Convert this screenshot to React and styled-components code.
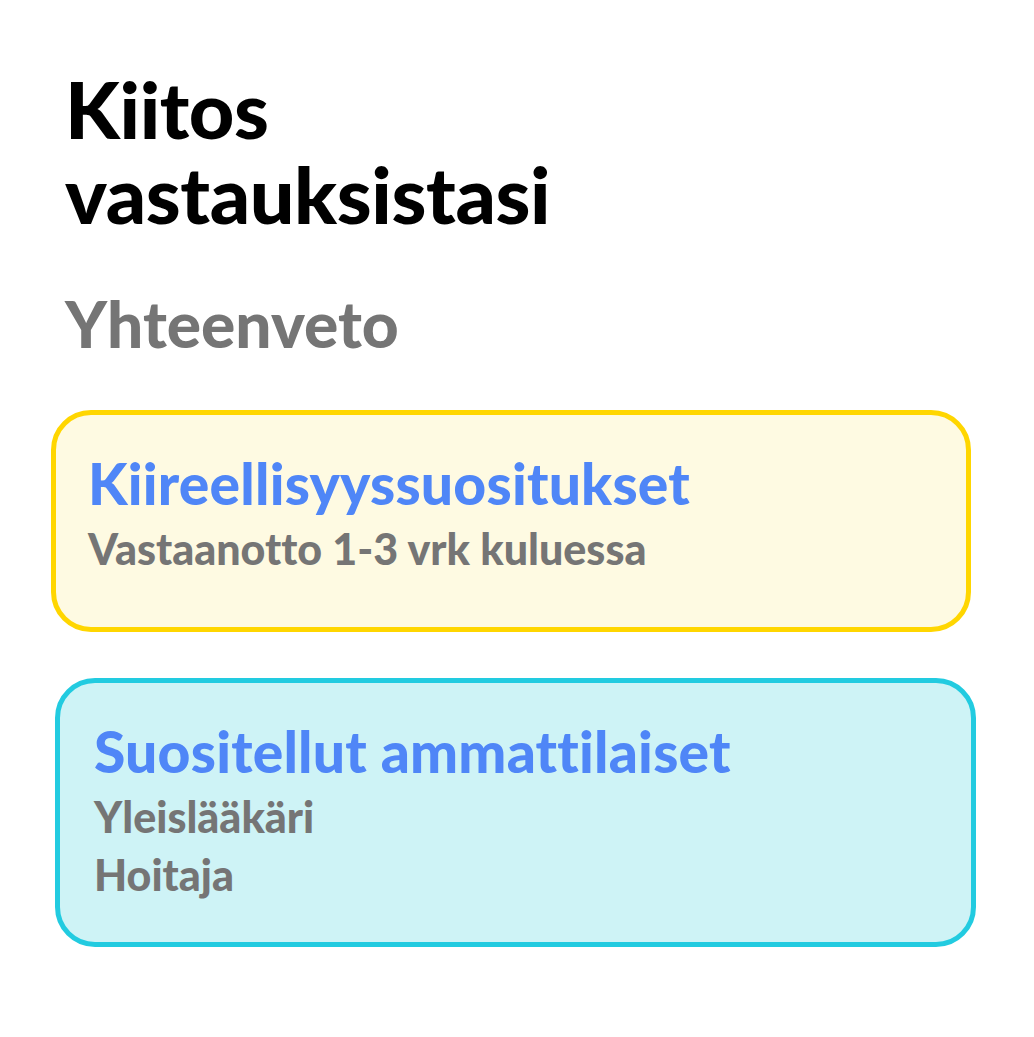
import React from "react";
import styled, { createGlobalStyle } from "styled-components";

const Global = createGlobalStyle`
  html, body { margin: 0; padding: 0; background: #ffffff; }
  body {
    font-family: Lato, "Noto Sans", sans-serif;
    font-variant-ligatures: none;
    font-feature-settings: "liga" 0, "clig" 0;
  }
`;

const Page = styled.main`
  display: flex;
  flex-direction: column;
  padding: 66px 58px 0 51px;
`;

const Title = styled.h1`
  margin: 0 0 0 14px;
  font-size: 79px;
  line-height: 85px;
  font-weight: 900;
  color: #000;
  letter-spacing: -0.4px;
`;

const Subtitle = styled.h2`
  margin: 52px 0 0 14px;
  font-size: 64px;
  line-height: 72px;
  font-weight: 900;
  color: #757575;
`;

const Card = styled.section`
  box-sizing: border-box;
  display: flex;
  flex-direction: column;
  border: 5px solid ${(p) => p.$border};
  background: ${(p) => p.$bg};
  border-radius: 40px;
  margin: ${(p) => p.$top}px ${(p) => p.$right || 0}px 0 ${(p) => p.$left || 0}px;
  min-height: ${(p) => p.$h}px;
  padding: ${(p) => p.$pad};
`;

const CardTitle = styled.h3`
  margin: 0 0 5px 0;
  font-size: 57px;
  line-height: 64px;
  font-weight: 900;
  color: #4f86f7;
  letter-spacing: 0.2px;
`;

const CardLine = styled.p`
  margin: 0;
  font-size: 43px;
  line-height: 58px;
  font-weight: 900;
  color: #757575;
`;

export default function App() {
  return (
    <>
      <Global />
      <Page>
        <Title>
          Kiitos
          <br />
          vastauksistasi
        </Title>
        <Subtitle>Yhteenveto</Subtitle>
        <Card $border="#ffd600" $bg="#fefae2" $top={50} $right={5} $h={222} $pad="36px 32px 0 32px">
          <CardTitle>Kiireellisyyssuositukset</CardTitle>
          <CardLine>Vastaanotto 1-3 vrk kuluessa</CardLine>
        </Card>
        <Card $border="#22cbe0" $bg="#cef3f6" $left={4} $top={46} $h={269} $pad="36px 34px 0 34px">
          <CardTitle>Suositellut ammattilaiset</CardTitle>
          <CardLine>Yleislääkäri</CardLine>
          <CardLine>Hoitaja</CardLine>
        </Card>
      </Page>
    </>
  );
}
